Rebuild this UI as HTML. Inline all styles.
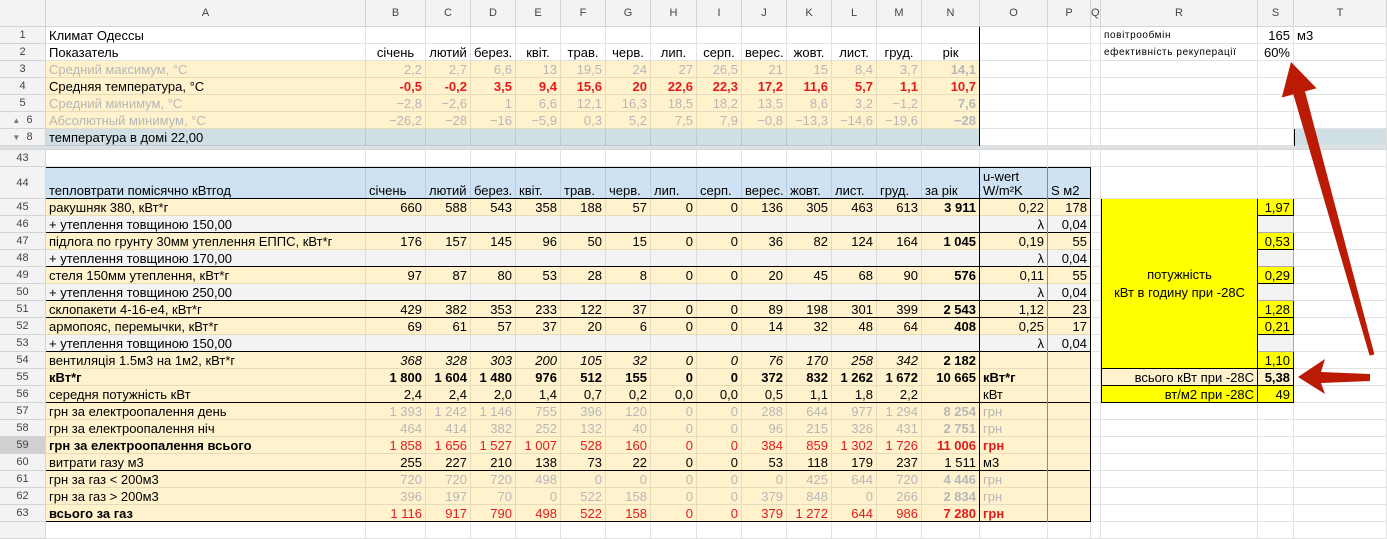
<!DOCTYPE html>
<html><head><meta charset="utf-8">
<style>
body{margin:0;width:1387px;height:526px;overflow:hidden;background:#fff;position:relative;font-family:"Liberation Sans",Arial,sans-serif}
table{border-collapse:separate;border-spacing:0;table-layout:fixed;width:1387px;position:absolute;top:0;left:0}
tr{height:17px}
td{border:0;border-right:1px solid #e2e2e2;border-bottom:1px solid #e2e2e2;padding:0 3px;white-space:nowrap;overflow:hidden;font-size:13px;text-align:right;line-height:14px;color:#000;vertical-align:bottom;box-sizing:border-box}
tr td.h{background:#f3f3f3;text-align:center;font-size:11px;color:#444 !important;font-weight:normal !important;border-color:#d4d4d4;padding:0;vertical-align:middle}
tr.hd td{background:#f3f3f3;text-align:center;font-size:11px;color:#444;border-color:#d4d4d4;vertical-align:middle}
td.l{text-align:left}
td.c{text-align:center}
tr.t td:nth-child(n+2):nth-child(-n+15){background:#fff2cc;border-color:#e6dbbb}
tr.b td:nth-child(n+2):nth-child(-n+17){background:#fff2cc;border-color:#e6dbbb}
tr.g td:nth-child(n+2):nth-child(-n+17){background:#f3f3f3;border-color:#dcdcdc}
tr.bl td:nth-child(n+2):nth-child(-n+17){background:#cfe2f3;border-color:#b9cde0}
tr.s td:nth-child(n+2):nth-child(-n+15){background:#d0dfe3;border-color:#bcc9cd}
td.s{background:#d0dfe3}
tr.gt td{color:#b7b7b7}
tr.rn td{color:#e31b1b}
tr.bo td{font-weight:bold}
tr.it td{font-style:italic}
td.y{background:#ffff00 !important;border-right:1px solid #000 !important;border-bottom:1px solid #000 !important;font-style:normal !important}
td.sg{background:#f3f3f3;border-color:#aaa}
td.bb{background:#fff2cc;border-right:1px solid #000;border-bottom:1px solid #000}
td.big{text-align:center;vertical-align:middle;line-height:18px;border-left:1px solid #000 !important}
.sm{font-size:10px;letter-spacing:.6px}
.blk{position:absolute;background:#000}
</style></head><body>
<table>
<colgroup><col style="width:46px"><col style="width:320px"><col style="width:60px"><col style="width:45px"><col style="width:45px"><col style="width:45px"><col style="width:45px"><col style="width:45px"><col style="width:46px"><col style="width:45px"><col style="width:45px"><col style="width:45px"><col style="width:45px"><col style="width:45px"><col style="width:58px"><col style="width:68px"><col style="width:43px"><col style="width:10px"><col style="width:157px"><col style="width:36px"><col style="width:93px"></colgroup>
<tr class=hd style="height:27px"><td><td>A<td>B<td>C<td>D<td>E<td>F<td>G<td>H<td>I<td>J<td>K<td>L<td>M<td>N<td>O<td>P<td style="text-align:left;padding:0">Q<td>R<td>S<td>T</tr>
<tr><td class=h>1<td class=l>Климат Одессы<td><td><td><td><td><td><td><td><td><td><td><td><td><td><td><td><td class=l><span class=sm>повітрообмін</span><td>165<td class=l>м3</tr>
<tr><td class=h>2<td class=l>Показатель<td class=c>січень<td class=c>лютий<td class=c>берез.<td class=c>квіт.<td class=c>трав.<td class=c>черв.<td class=c>лип.<td class=c>серп.<td class=c>верес.<td class=c>жовт.<td class=c>лист.<td class=c>груд.<td class=c>рік<td><td><td><td class=l><span class=sm>ефективність рекуперації</span><td>60%<td></tr>
<tr class="t gt"><td class=h>3<td class=l>Средний максимум, °С<td>2,2<td>2,7<td>6,6<td>13<td>19,5<td>24<td>27<td>26,5<td>21<td>15<td>8,4<td>3,7<td><b>14,1</b><td><td><td><td><td><td></tr>
<tr class=t><td class=h>4<td class=l>Средняя температура, °С<td style="color:#e31b1b;font-weight:bold">-0,5<td style="color:#e31b1b;font-weight:bold">-0,2<td style="color:#e31b1b;font-weight:bold">3,5<td style="color:#e31b1b;font-weight:bold">9,4<td style="color:#e31b1b;font-weight:bold">15,6<td style="color:#e31b1b;font-weight:bold">20<td style="color:#e31b1b;font-weight:bold">22,6<td style="color:#e31b1b;font-weight:bold">22,3<td style="color:#e31b1b;font-weight:bold">17,2<td style="color:#e31b1b;font-weight:bold">11,6<td style="color:#e31b1b;font-weight:bold">5,7<td style="color:#e31b1b;font-weight:bold">1,1<td style="color:#e31b1b;font-weight:bold">10,7<td><td><td><td><td><td></tr>
<tr class="t gt"><td class=h>5<td class=l>Средний минимум, °С<td>−2,8<td>−2,6<td>1<td>6,6<td>12,1<td>16,3<td>18,5<td>18,2<td>13,5<td>8,6<td>3,2<td>−1,2<td><b>7,6</b><td><td><td><td><td><td></tr>
<tr class="t gt"><td class=h><small style="font-size:8px;color:#777">▲</small>&nbsp;&nbsp;6<td class=l>Абсолютный минимум, °С<td>−26,2<td>−28<td>−16<td>−5,9<td>0,3<td>5,2<td>7,5<td>7,9<td>−0,8<td>−13,3<td>−14,6<td>−19,6<td><b>−28</b><td><td><td><td><td><td></tr>
<tr class=s><td class=h><small style="font-size:8px;color:#777">▼</small>&nbsp;&nbsp;8<td class=l>температура в домі 22,00<td><td><td><td><td><td><td><td><td><td><td><td><td><td><td><td><td><td><td class=s></tr>
<tr style="height:4px"><td colspan=21 style="background:#dde1e4;border-color:#d4d8db;padding:0;line-height:1px;font-size:1px"></tr>
<tr><td class=h>43<td><td><td><td><td><td><td><td><td><td><td><td><td><td><td><td><td><td><td><td></tr>
<tr class=bl style="height:32px"><td class=h>44<td class=l>тепловтрати помісячно кВтгод<td class=l>січень<td class=l>лютий<td class=l>берез.<td class=l>квіт.<td class=l>трав.<td class=l>черв.<td class=l>лип.<td class=l>серп.<td class=l>верес.<td class=l>жовт.<td class=l>лист.<td class=l>груд.<td class=l>за рік<td class=l style="line-height:14px">u-wert<br>W/m²K<td class=l>S м2<td><td><td><td></tr>
<tr class=b><td class=h>45<td class=l>ракушняк 380, кВт*г<td>660<td>588<td>543<td>358<td>188<td>57<td>0<td>0<td>136<td>305<td>463<td>613<td><b>3 911</b><td>0,22<td>178<td><td rowspan=10 class="y big">потужність<br>кВт в годину при -28С<td class=y>1,97<td></tr>
<tr class=g><td class=h>46<td class=l>+ утеплення товщиною 150,00<td><td><td><td><td><td><td><td><td><td><td><td><td><td>λ<td>0,04<td><td class=sg><td></tr>
<tr class=b><td class=h>47<td class=l>підлога по грунту 30мм утеплення ЕППС, кВт*г<td>176<td>157<td>145<td>96<td>50<td>15<td>0<td>0<td>36<td>82<td>124<td>164<td><b>1 045</b><td>0,19<td>55<td><td class=y>0,53<td></tr>
<tr class=g><td class=h>48<td class=l>+ утеплення товщиною 170,00<td><td><td><td><td><td><td><td><td><td><td><td><td><td>λ<td>0,04<td><td class=sg><td></tr>
<tr class=b><td class=h>49<td class=l>стеля 150мм утеплення, кВт*г<td>97<td>87<td>80<td>53<td>28<td>8<td>0<td>0<td>20<td>45<td>68<td>90<td><b>576</b><td>0,11<td>55<td><td class=y>0,29<td></tr>
<tr class=g><td class=h>50<td class=l>+ утеплення товщиною 250,00<td><td><td><td><td><td><td><td><td><td><td><td><td><td>λ<td>0,04<td><td class=sg><td></tr>
<tr class=b><td class=h>51<td class=l>склопакети 4-16-е4, кВт*г<td>429<td>382<td>353<td>233<td>122<td>37<td>0<td>0<td>89<td>198<td>301<td>399<td><b>2 543</b><td>1,12<td>23<td><td class=y>1,28<td></tr>
<tr class=b><td class=h>52<td class=l>армопояс, перемычки, кВт*г<td>69<td>61<td>57<td>37<td>20<td>6<td>0<td>0<td>14<td>32<td>48<td>64<td><b>408</b><td>0,25<td>17<td><td class=y>0,21<td></tr>
<tr class=g><td class=h>53<td class=l>+ утеплення товщиною 150,00<td><td><td><td><td><td><td><td><td><td><td><td><td><td>λ<td>0,04<td><td class=sg><td></tr>
<tr class="b it"><td class=h style="font-style:normal">54<td class=l style="font-style:normal">вентиляція 1.5м3 на 1м2, кВт*г<td>368<td>328<td>303<td>200<td>105<td>32<td>0<td>0<td>76<td>170<td>258<td>342<td style="font-style:normal"><b>2 182</b><td><td><td><td class=y>1,10<td></tr>
<tr class="b bo"><td class=h>55<td class=l>кВт*г<td>1 800<td>1 604<td>1 480<td>976<td>512<td>155<td>0<td>0<td>372<td>832<td>1 262<td>1 672<td>10 665<td class=l>кВт*г<td><td><td class=bb style="font-weight:normal;border-left:1px solid #000">всього кВт при -28С<td class=bb>5,38<td></tr>
<tr class=b><td class=h>56<td class=l>середня потужність кВт<td>2,4<td>2,4<td>2,0<td>1,4<td>0,7<td>0,2<td>0,0<td>0,0<td>0,5<td>1,1<td>1,8<td>2,2<td><td class=l>кВт<td><td><td class=y style="border-left:1px solid #000">вт/м2 при -28С<td class=y>49<td></tr>
<tr class="b gt"><td class=h>57<td class=l style="color:#000">грн за електроопалення день<td>1 393<td>1 242<td>1 146<td>755<td>396<td>120<td>0<td>0<td>288<td>644<td>977<td>1 294<td><b>8 254</b><td class=l>грн<td><td><td><td><td></tr>
<tr class="b gt"><td class=h>58<td class=l style="color:#000">грн за електроопалення ніч<td>464<td>414<td>382<td>252<td>132<td>40<td>0<td>0<td>96<td>215<td>326<td>431<td><b>2 751</b><td class=l>грн<td><td><td><td><td></tr>
<tr class="b rn"><td class=h style="background:#d0d0d0">59<td class=l style="color:#000;font-weight:bold">грн за електроопалення всього<td>1 858<td>1 656<td>1 527<td>1 007<td>528<td>160<td>0<td>0<td>384<td>859<td>1 302<td>1 726<td><b>11 006</b><td class=l><b>грн</b><td><td><td><td><td></tr>
<tr class=b><td class=h>60<td class=l>витрати газу м3<td>255<td>227<td>210<td>138<td>73<td>22<td>0<td>0<td>53<td>118<td>179<td>237<td>1 511<td class=l>м3<td><td><td><td><td></tr>
<tr class="b gt"><td class=h>61<td class=l style="color:#000">грн за газ &lt; 200м3<td>720<td>720<td>720<td>498<td>0<td>0<td>0<td>0<td>0<td>425<td>644<td>720<td><b>4 446</b><td class=l>грн<td><td><td><td><td></tr>
<tr class="b gt"><td class=h>62<td class=l style="color:#000">грн за газ &gt; 200м3<td>396<td>197<td>70<td>0<td>522<td>158<td>0<td>0<td>379<td>848<td>0<td>266<td><b>2 834</b><td class=l>грн<td><td><td><td><td></tr>
<tr class="b rn"><td class=h>63<td class=l style="color:#000;font-weight:bold">всього за газ<td>1 116<td>917<td>790<td>498<td>522<td>158<td>0<td>0<td>379<td>1 272<td>644<td>986<td><b>7 280</b><td class=l><b>грн</b><td><td><td><td><td></tr>
<tr><td class=h><td><td><td><td><td><td><td><td><td><td><td><td><td><td><td><td><td><td><td><td></tr>
</table>
<div class=blk style="left:979px;top:27px;width:1px;height:119px"></div>
<div class=blk style="left:1294px;top:129px;width:1px;height:17px"></div>
<div class=blk style="left:46px;top:167px;width:1045px;height:1px"></div>
<div class=blk style="left:46px;top:198px;width:1045px;height:1px"></div>
<div class=blk style="left:46px;top:232px;width:1045px;height:1px"></div>
<div class=blk style="left:46px;top:266px;width:1045px;height:1px"></div>
<div class=blk style="left:46px;top:300px;width:1045px;height:1px"></div>
<div class=blk style="left:46px;top:317px;width:1045px;height:1px"></div>
<div class=blk style="left:46px;top:351px;width:1045px;height:1px"></div>
<div class=blk style="left:46px;top:402px;width:1045px;height:1px"></div>
<div class=blk style="left:46px;top:470px;width:1045px;height:1px"></div>
<div class=blk style="left:46px;top:521px;width:1045px;height:1px"></div>
<div class=blk style="left:979px;top:167px;width:1px;height:355px"></div>
<div class=blk style="left:1047px;top:167px;width:1px;height:355px;background:#8a8a8a"></div>
<div class=blk style="left:1090px;top:167px;width:1px;height:355px"></div>
<svg style="position:absolute;left:0;top:0" width="1387" height="526">
<polygon fill="#bb1a05" points="1291,62 1316.6,88.3 1305,91.4 1374.4,354.4 1369.6,355.6 1293.4,94.4 1281.8,97.5"/>
<polygon fill="#bb1a05" points="1298,377 1325,359 1321,372 1370,374 1370,381 1321,383 1325,394"/>
</svg>
</body></html>
